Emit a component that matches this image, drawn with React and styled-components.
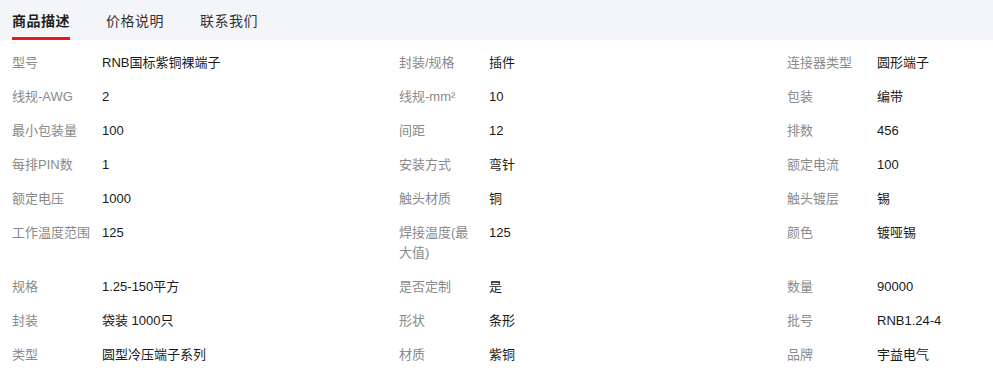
import React from "react";
import styled, { createGlobalStyle } from "styled-components";

const GlobalStyle = createGlobalStyle`
  html, body {
    margin: 0;
    padding: 0;
    background: #fff;
  }
  body {
    font-family: "Liberation Sans", "Noto Sans CJK SC", sans-serif;
  }
`;

const Page = styled.div`
  width: 993px;
  overflow: hidden;
`;

const TabBar = styled.div`
  display: flex;
  height: 40px;
  background: #f4f5f8;
  padding-left: 12px;
  gap: 36px;
`;

const Tab = styled.div`
  position: relative;
  display: flex;
  align-items: center;
  font-size: 14px;
  letter-spacing: 0.5px;
  color: ${(p) => (p.active ? "#1f1f1f" : "#333")};
  font-weight: ${(p) => (p.active ? 700 : 400)};

  &::after {
    content: "";
    display: ${(p) => (p.active ? "block" : "none")};
    position: absolute;
    left: 0;
    right: 0;
    bottom: 0;
    height: 3px;
    background: #e8191d;
  }
`;

const Specs = styled.div`
  display: grid;
  grid-template-columns: 387px 388px 1fr;
  row-gap: 14px;
  padding: 13px 0 0 12px;
  font-size: 13px;
  line-height: 20px;
`;

const Item = styled.div`
  display: flex;
  align-items: flex-start;
`;

const Label = styled.div`
  width: 80px;
  margin-right: 10px;
  color: #8a8a8a;
  flex-shrink: 0;
`;

const Value = styled.div`
  color: #1a1a1a;
`;

const tabs = ["商品描述", "价格说明", "联系我们"];

const specs = [
  ["型号", "RNB国标紫铜裸端子"],
  ["封装/规格", "插件"],
  ["连接器类型", "圆形端子"],
  ["线规-AWG", "2"],
  ["线规-mm²", "10"],
  ["包装", "编带"],
  ["最小包装量", "100"],
  ["间距", "12"],
  ["排数", "456"],
  ["每排PIN数", "1"],
  ["安装方式", "弯针"],
  ["额定电流", "100"],
  ["额定电压", "1000"],
  ["触头材质", "铜"],
  ["触头镀层", "锡"],
  ["工作温度范围", "125"],
  ["焊接温度(最大值)", "125"],
  ["颜色", "镀哑锡"],
  ["规格", "1.25-150平方"],
  ["是否定制", "是"],
  ["数量", "90000"],
  ["封装", "袋装 1000只"],
  ["形状", "条形"],
  ["批号", "RNB1.24-4"],
  ["类型", "圆型冷压端子系列"],
  ["材质", "紫铜"],
  ["品牌", "宇益电气"],
];

const App = () => {
  return (
    <>
      <GlobalStyle />
      <Page>
        <TabBar>
          {tabs.map((t, i) => (
            <Tab key={t} active={i === 0}>
              {t}
            </Tab>
          ))}
        </TabBar>
        <Specs>
          {specs.map(([label, value]) => (
            <Item key={label}>
              <Label>{label}</Label>
              <Value>{value}</Value>
            </Item>
          ))}
        </Specs>
      </Page>
    </>
  );
};

export default App;
